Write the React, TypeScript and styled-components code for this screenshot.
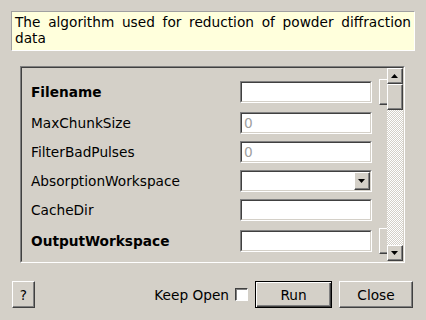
import React from 'react';
import styled, { createGlobalStyle } from 'styled-components';

const bg = '#d4d0c8';

const GlobalStyle = createGlobalStyle`
  html, body {
    margin: 0;
    padding: 0;
    background: ${bg};
  }
  body {
    font-family: 'DejaVu Sans', 'Liberation Sans', sans-serif;
    font-size: 13.7px;
    color: #000;
  }
`;

const Dialog = styled.div`
  width: 426px;
  height: 320px;
  box-sizing: border-box;
  display: flex;
  flex-direction: column;
  background: ${bg};
`;

const Description = styled.div`
  margin: 11px 11px 0 11px;
  padding: 2px 3px 4px 3px;
  background: #ffffdc;
  border: 1px solid;
  border-color: #a0a0a0 #ffffff #ffffff #a0a0a0;
  line-height: 16px;
  text-align: justify;
`;

// sunken 2px frame around the property list
const Frame = styled.div`
  margin: 15px 21px 0 20px;
  height: 197px;
  box-sizing: border-box;
  border: 1px solid;
  border-color: #808080 #ffffff #ffffff #808080;
  display: flex;
`;

const FrameInner = styled.div`
  flex: 1;
  display: flex;
  border: 1px solid;
  border-color: #404040 ${bg} ${bg} #404040;
  min-width: 0;
`;

const Viewport = styled.div`
  flex: 1;
  overflow: hidden;
  padding: 11px 0 0 9px;
  min-width: 0;
`;

const Grid = styled.div`
  display: grid;
  grid-template-columns: 202px 132px 20px;
  column-gap: 7px;
  row-gap: 7px;
  align-items: center;
`;

const Label = styled.div<{ $bold?: boolean }>`
  font-weight: ${(p) => (p.$bold ? 'bold' : 'normal')};
  white-space: nowrap;
`;

const Field = styled.div<{ $tall?: boolean }>`
  height: 22px;
  box-sizing: border-box;
  border: 1px solid;
  border-color: #808080 #ffffff #ffffff #808080;
  margin: ${(p) => (p.$tall ? '2px 0' : '0')};
`;

const FieldInner = styled.div`
  height: 100%;
  box-sizing: border-box;
  border: 1px solid;
  border-color: #404040 ${bg} ${bg} #404040;
  background: #fff;
  display: flex;
  align-items: center;
  justify-content: space-between;
  padding-left: 2px;
  color: #a0a0a0;
`;

const Raised = styled.div`
  box-sizing: border-box;
  border: 1px solid;
  border-color: #ffffff #404040 #404040 #ffffff;
  background: ${bg};
`;

const RaisedInner = styled.div`
  height: 100%;
  box-sizing: border-box;
  border-right: 1px solid #808080;
  border-bottom: 1px solid #808080;
  display: flex;
  align-items: center;
  justify-content: center;
`;

const DropButton = styled(Raised)`
  width: 16px;
  height: 18px;
`;

const Marker = styled(Raised)`
  width: 20px;
  height: 26px;
`;

const Spacer = styled.div``;

const ScrollBar = styled.div`
  width: 16px;
  display: flex;
  flex-direction: column;
`;

const ArrowButton = styled(Raised)`
  height: 16px;
`;

const Thumb = styled(Raised)`
  height: 26px;
`;

const Track = styled.div`
  flex: 1;
  background: repeating-conic-gradient(#ffffff 0 25%, ${bg} 0 50%) 0 0 / 2px 2px;
`;

const Footer = styled.div`
  margin-top: auto;
  padding: 0 13px 12px 12px;
  display: flex;
  align-items: center;
`;

const Button = styled.button<{ $width: number; $default?: boolean }>`
  width: ${(p) => p.$width}px;
  height: 27px;
  padding: 0;
  font: inherit;
  color: #000;
  background: ${bg};
  box-sizing: border-box;
  border: 1px solid;
  border-color: ${(p) => (p.$default ? '#000' : '#fff #404040 #404040 #fff')};
  box-shadow: ${(p) =>
    p.$default
      ? 'inset 1px 1px 0 #fff, inset -1px -1px 0 #404040, inset -2px -2px 0 #808080'
      : 'inset -1px -1px 0 #808080'};
`;

const KeepOpen = styled.label`
  margin-left: auto;
  display: flex;
  align-items: center;
  gap: 6px;
  margin-right: 7px;
`;

const Check = styled.span`
  width: 13px;
  height: 13px;
  box-sizing: border-box;
  background: #fff;
  border: 1px solid;
  border-color: #404040 #ffffff #ffffff #404040;
  box-shadow: inset 1px 1px 0 #808080;
`;

const CloseButton = styled(Button)`
  margin-left: 7px;
`;

const Arrow = ({ up }: { up?: boolean }) => (
  <svg width="7" height="4" viewBox="0 0 7 4">
    <path d={up ? 'M3.5 0 L7 4 L0 4 Z' : 'M0 0 L7 0 L3.5 4 Z'} fill="#000" />
  </svg>
);

type Prop = { name: string; bold?: boolean; value?: string; combo?: boolean };

const props: Prop[] = [
  { name: 'Filename', bold: true },
  { name: 'MaxChunkSize', value: '0' },
  { name: 'FilterBadPulses', value: '0' },
  { name: 'AbsorptionWorkspace', combo: true },
  { name: 'CacheDir' },
  { name: 'OutputWorkspace', bold: true },
];

const App = () => {
  return (
    <Dialog>
      <GlobalStyle />
      <Description>The algorithm used for reduction of powder diffraction data</Description>
      <Frame>
        <FrameInner>
          <Viewport>
            <Grid>
              {props.map((p) => (
                <React.Fragment key={p.name}>
                  <Label $bold={p.bold}>{p.name}</Label>
                  <Field $tall={p.bold}>
                    <FieldInner>
                      <span>{p.value}</span>
                      {p.combo && (
                        <DropButton>
                          <RaisedInner>
                            <Arrow />
                          </RaisedInner>
                        </DropButton>
                      )}
                    </FieldInner>
                  </Field>
                  {p.bold ? (
                    <Marker>
                      <RaisedInner />
                    </Marker>
                  ) : (
                    <Spacer />
                  )}
                </React.Fragment>
              ))}
            </Grid>
          </Viewport>
          <ScrollBar>
            <ArrowButton>
              <RaisedInner>
                <Arrow up />
              </RaisedInner>
            </ArrowButton>
            <Thumb>
              <RaisedInner />
            </Thumb>
            <Track />
            <ArrowButton>
              <RaisedInner>
                <Arrow />
              </RaisedInner>
            </ArrowButton>
          </ScrollBar>
        </FrameInner>
      </Frame>
      <Footer>
        <Button $width={23}>?</Button>
        <KeepOpen>
          Keep Open
          <Check />
        </KeepOpen>
        <Button $width={77} $default>
          Run
        </Button>
        <CloseButton $width={74}>Close</CloseButton>
      </Footer>
    </Dialog>
  );
};

export default App;
